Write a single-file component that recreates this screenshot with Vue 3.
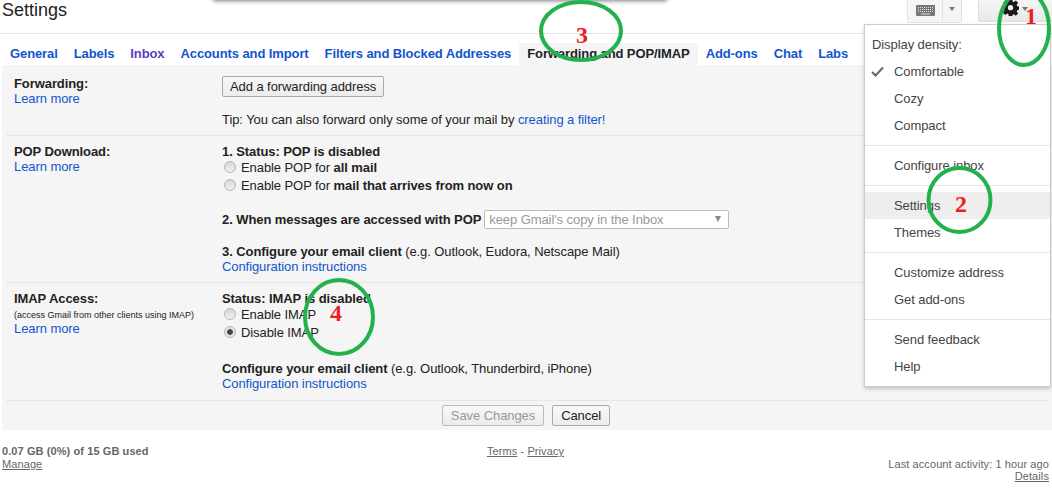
<script setup>
const tabs = [
  { name: "General" },
  { name: "Labels" },
  { name: "Inbox", visited: true },
  { name: "Accounts and Import" },
  { name: "Filters and Blocked Addresses" },
  { name: "Forwarding and POP/IMAP", active: true },
  { name: "Add-ons" },
  { name: "Chat" },
  { name: "Labs" },
];

const menuGroups = [
  [
    { label: "Comfortable", checked: true },
    { label: "Cozy" },
    { label: "Compact" },
  ],
  [{ label: "Configure inbox" }],
  [{ label: "Settings", hover: true }, { label: "Themes" }],
  [{ label: "Customize address" }, { label: "Get add-ons" }],
  [{ label: "Send feedback" }, { label: "Help" }],
];
</script>

<template>
  <div class="page">
    <header class="header">
      <h1 class="title">Settings</h1>
      <div class="tools">
        <div class="kbd-btn">
          <span class="kbd-icon">
            <svg width="19" height="11" viewBox="0 0 19 11">
              <rect width="19" height="11" rx="1" fill="#777" />
              <path d="M2 2.5h15M2 4.5h15M2 6.5h15" stroke="#ddd" stroke-width="1" stroke-dasharray="1 1" />
              <path d="M5 9h9" stroke="#ddd" stroke-width="1" />
            </svg>
          </span>
          <span class="kbd-arrow"><i class="arrow"></i></span>
        </div>
        <div class="gear-btn">
          <svg class="gear" width="17" height="17" viewBox="0 0 18 18">
            <path
              d="M7.2 0h3.6l.4 2.6 1.4.6 2.1-1.5 2.4 2.4-1.5 2.1.6 1.4 2.3.4v3.4l-2.3.4-.6 1.4 1.5 2.1-2.4 2.4-2.1-1.5-1.4.6-.4 2.2H7.2L6.8 16l-1.4-.6-2.1 1.5-2.4-2.4 1.5-2.1-.6-1.4L0 11V7.6l2.3-.4.6-1.4-1.5-2.1 2.4-2.4 2.1 1.5 1.4-.6zM9 6.4a2.8 2.8 0 1 0 0 5.6 2.8 2.8 0 0 0 0-5.6z"
              fill="#1a1a1a"
              fill-rule="evenodd"
            />
          </svg>
          <i class="arrow"></i>
        </div>
      </div>
    </header>

    <nav class="tabs">
      <a
        v-for="tab in tabs"
        :key="tab.name"
        class="tab"
        :class="{ active: tab.active, visited: tab.visited }"
      >{{ tab.name }}</a>
    </nav>

    <main class="panel">
      <section class="row row-forward">
        <div>
          <div class="label">Forwarding:</div>
          <a class="link">Learn more</a>
        </div>
        <div>
          <button class="btn add-btn">Add a forwarding address</button>
          <div class="tip">Tip: You can also forward only some of your mail by <a class="link">creating a filter!</a></div>
        </div>
      </section>

      <section class="row">
        <div>
          <div class="label">POP Download:</div>
          <a class="link">Learn more</a>
        </div>
        <div>
          <div class="label">1. Status: POP is disabled</div>
          <div class="radio-row first"><span class="radio"></span>Enable POP for <b>all mail</b></div>
          <div class="radio-row"><span class="radio"></span>Enable POP for <b>mail that arrives from now on</b></div>
          <div class="select-row">
            <b>2. When messages are accessed with POP</b>
            <div class="fake-select">keep Gmail's copy in the Inbox<i class="select-arrow"></i></div>
          </div>
          <div class="config"><b>3. Configure your email client</b> (e.g. Outlook, Eudora, Netscape Mail)</div>
          <a class="link">Configuration instructions</a>
        </div>
      </section>

      <section class="row row-imap">
        <div>
          <div class="label">IMAP Access:</div>
          <div class="small">(access Gmail from other clients using IMAP)</div>
          <a class="link">Learn more</a>
        </div>
        <div>
          <div class="label">Status: IMAP is disabled</div>
          <div class="radio-row first"><span class="radio"></span>Enable IMAP</div>
          <div class="radio-row"><span class="radio checked"></span>Disable IMAP</div>
          <div class="config config-imap"><b>Configure your email client</b> (e.g. Outlook, Thunderbird, iPhone)</div>
          <a class="link">Configuration instructions</a>
        </div>
      </section>

      <div class="actions">
        <button class="btn save-btn">Save Changes</button>
        <button class="btn cancel-btn">Cancel</button>
      </div>
    </main>

    <footer class="footer">
      <div>
        <div class="usage">0.07 GB (0%) of 15 GB used</div>
        <a class="foot-link">Manage</a>
      </div>
      <div class="foot-mid"><a class="foot-link">Terms</a> - <a class="foot-link">Privacy</a></div>
      <div class="foot-right">
        <div>Last account activity: 1 hour ago</div>
        <a class="foot-link">Details</a>
      </div>
    </footer>

    <div class="top-popup"></div>

    <div class="menu">
      <div class="menu-head">Display density:</div>
      <div v-for="(group, i) in menuGroups" :key="i" class="menu-group">
        <div
          v-for="item in group"
          :key="item.label"
          class="menu-item"
          :class="{ hover: item.hover }"
        >
          <svg v-if="item.checked" class="check" width="13" height="11" viewBox="0 0 13 11">
            <path d="M1 6l3.5 3.5L12 1.5" fill="none" stroke="#666" stroke-width="2" />
          </svg>
          {{ item.label }}
        </div>
      </div>
    </div>

    <svg class="marks" width="1052" height="490" viewBox="0 0 1052 490">
      <g fill="none" stroke="#22b14c" stroke-width="4">
        <ellipse cx="1024" cy="28" rx="25" ry="37" />
        <ellipse cx="581" cy="31" rx="40" ry="29" />
        <ellipse cx="959.5" cy="200" rx="31" ry="32" />
        <ellipse cx="339" cy="317" rx="34" ry="37" />
      </g>
    </svg>
    <span class="num num-1">1</span>
    <span class="num num-2">2</span>
    <span class="num num-3">3</span>
    <span class="num num-4">4</span>
  </div>
</template>

<style>
html,
body {
  margin: 0;
  background: #fff;
}
</style>

<style scoped>
.page {
  position: relative;
  width: 1052px;
  height: 490px;
  overflow: hidden;
  background: #fff;
  font-family: "Liberation Sans", Arial, sans-serif;
  font-size: 13px;
  line-height: 15px;
  letter-spacing: -0.08px;
  color: #222;
}
.header {
  display: flex;
  justify-content: space-between;
  height: 33px;
  border-bottom: 1px solid #e5e5e5;
}
.title {
  margin: 0;
  padding-left: 2px;
  font-size: 18px;
  line-height: 20px;
  font-weight: normal;
  letter-spacing: 0;
  color: #222;
}
.tools {
  display: flex;
  gap: 16px;
  height: 23px;
}
.kbd-btn {
  display: flex;
  width: 53px;
  height: 22px;
  border: 1px solid #e3e3e3;
  border-top: 0;
  background: #f5f5f5;
  border-radius: 0 0 2px 2px;
}
.kbd-icon {
  display: flex;
  justify-content: center;
  width: 34px;
  padding-top: 5px;
  border-right: 1px solid #e3e3e3;
}
.kbd-arrow {
  flex: 1;
  display: flex;
  justify-content: center;
  padding-top: 7px;
}
.arrow {
  display: block;
  width: 0;
  height: 0;
  border-left: 3.5px solid transparent;
  border-right: 3.5px solid transparent;
  border-top: 4px solid #777;
}
.gear-btn {
  position: relative;
  display: flex;
  width: 74px;
  height: 22px;
  border: 1px solid #ddd;
  border-top: 0;
  border-right: 0;
  background: linear-gradient(#f5f5f5, #e8e8e8);
  justify-content: flex-end;
  padding: 7px 24px 0 0;
  box-sizing: border-box;
}
.gear {
  position: absolute;
  left: 23px;
  top: -1px;
}
.tabs {
  display: flex;
  height: 22px;
  margin-top: 9px;
  padding-left: 2px;
}
.tab {
  padding: 3px 8px 0;
  font-weight: bold;
  color: #15c;
  font-size: 13px;
  line-height: 15px;
  letter-spacing: -0.1px;
}
.tab.visited {
  color: #5b3cc4;
}
.tab.active {
  background: #f5f5f5;
  color: #222;
}
.panel {
  margin-left: 2px;
  background: #f5f5f5;
  overflow: hidden;
}
.row {
  display: grid;
  grid-template-columns: 208px 1fr;
  margin: 0 4px;
  padding: 8px 8px;
  border-bottom: 1px solid #e5e5e5;
}
.row-forward {
  padding-top: 11px;
}
.row-imap {
  padding-bottom: 9px;
}
.label {
  font-weight: bold;
}
.small {
  margin-top: 3px;
  font-size: 9px;
  line-height: 12px;
  letter-spacing: 0;
}
.link {
  color: #15c;
}
.row > div > .link {
  display: block;
}
.btn {
  display: block;
  height: 21px;
  padding: 0 8px;
  border: 1px solid #aaa;
  border-radius: 2px;
  background: linear-gradient(#f8f8f8, #ececec);
  font: 13px/19px "Liberation Sans", Arial, sans-serif;
  letter-spacing: -0.08px;
  color: #222;
}
.add-btn {
  padding: 0 7px;
}
.tip {
  margin-top: 15px;
}
.radio-row {
  display: flex;
  align-items: center;
  height: 18px;
  white-space: pre;
}
.radio-row.first {
  margin-top: -1px;
}
.radio {
  flex: none;
  box-sizing: border-box;
  width: 12px;
  height: 12px;
  margin: 0 5px 0 2px;
  border: 1px solid #b5b5b5;
  border-radius: 50%;
  background: linear-gradient(#d8d8d8, #f0f0f0);
}
.radio.checked {
  background: radial-gradient(circle, #444 0 2.5px, #e4e4e4 3.2px);
}
.select-row {
  display: flex;
  align-items: center;
  gap: 3px;
  height: 19px;
  margin-top: 16px;
}
.fake-select {
  position: relative;
  box-sizing: border-box;
  width: 245px;
  height: 19px;
  padding-left: 4px;
  line-height: 17px;
  border: 1px solid #bbb;
  border-radius: 2px;
  background: #fff;
  color: #999;
}
.select-arrow {
  position: absolute;
  right: 7px;
  top: 5px;
  width: 0;
  height: 0;
  border-left: 3.5px solid transparent;
  border-right: 3.5px solid transparent;
  border-top: 6px solid #888;
}
.config {
  margin-top: 15px;
}
.config-imap {
  margin-top: 20px;
}
.actions {
  display: flex;
  justify-content: center;
  gap: 8px;
  padding: 4px 2px 4px 0;
}
.save-btn {
  color: #999;
  border-color: #bbb;
}
.footer {
  display: grid;
  grid-template-columns: 1fr auto 1fr;
  padding: 15px 3px 0 2px;
  font-size: 11px;
  line-height: 13px;
  letter-spacing: 0.09px;
  color: #666;
}
.usage {
  font-weight: bold;
}
.foot-link {
  color: #666;
  text-decoration: underline;
}
.foot-right {
  margin-top: 13px;
  line-height: 12px;
  text-align: right;
}
.top-popup {
  position: absolute;
  left: 213px;
  top: -10px;
  width: 454px;
  height: 10px;
  background: #fff;
  box-shadow: 0 1px 4px rgba(0, 0, 0, 0.5);
}
.menu {
  position: absolute;
  left: 864px;
  top: 24px;
  box-sizing: border-box;
  width: 187px;
  height: 363px;
  padding-top: 6px;
  background: #fff;
  border: 1px solid #ccc;
  box-shadow: 0 2px 4px rgba(0, 0, 0, 0.2);
  color: #444;
}
.menu-head {
  height: 27px;
  padding-left: 7px;
  line-height: 27px;
}
.menu-group {
  padding-bottom: 6px;
  margin-bottom: 6px;
  border-bottom: 1px solid #e5e5e5;
}
.menu-group:last-child {
  border-bottom: 0;
}
.menu-item {
  position: relative;
  height: 27px;
  padding-left: 29px;
  line-height: 27px;
}
.menu-item.hover {
  background: #eee;
}
.check {
  position: absolute;
  left: 6px;
  top: 8px;
}
.marks {
  position: absolute;
  left: 0;
  top: 0;
  pointer-events: none;
}
.num {
  position: absolute;
  font-family: "Liberation Serif", serif;
  font-weight: bold;
  font-size: 24px;
  line-height: 24px;
  letter-spacing: 0;
  color: #ed1c24;
}
.num-1 { left: 1025px; top: 4px; }
.num-2 { left: 955px; top: 192px; }
.num-3 { left: 576px; top: 23px; }
.num-4 { left: 330px; top: 301px; }
</style>
